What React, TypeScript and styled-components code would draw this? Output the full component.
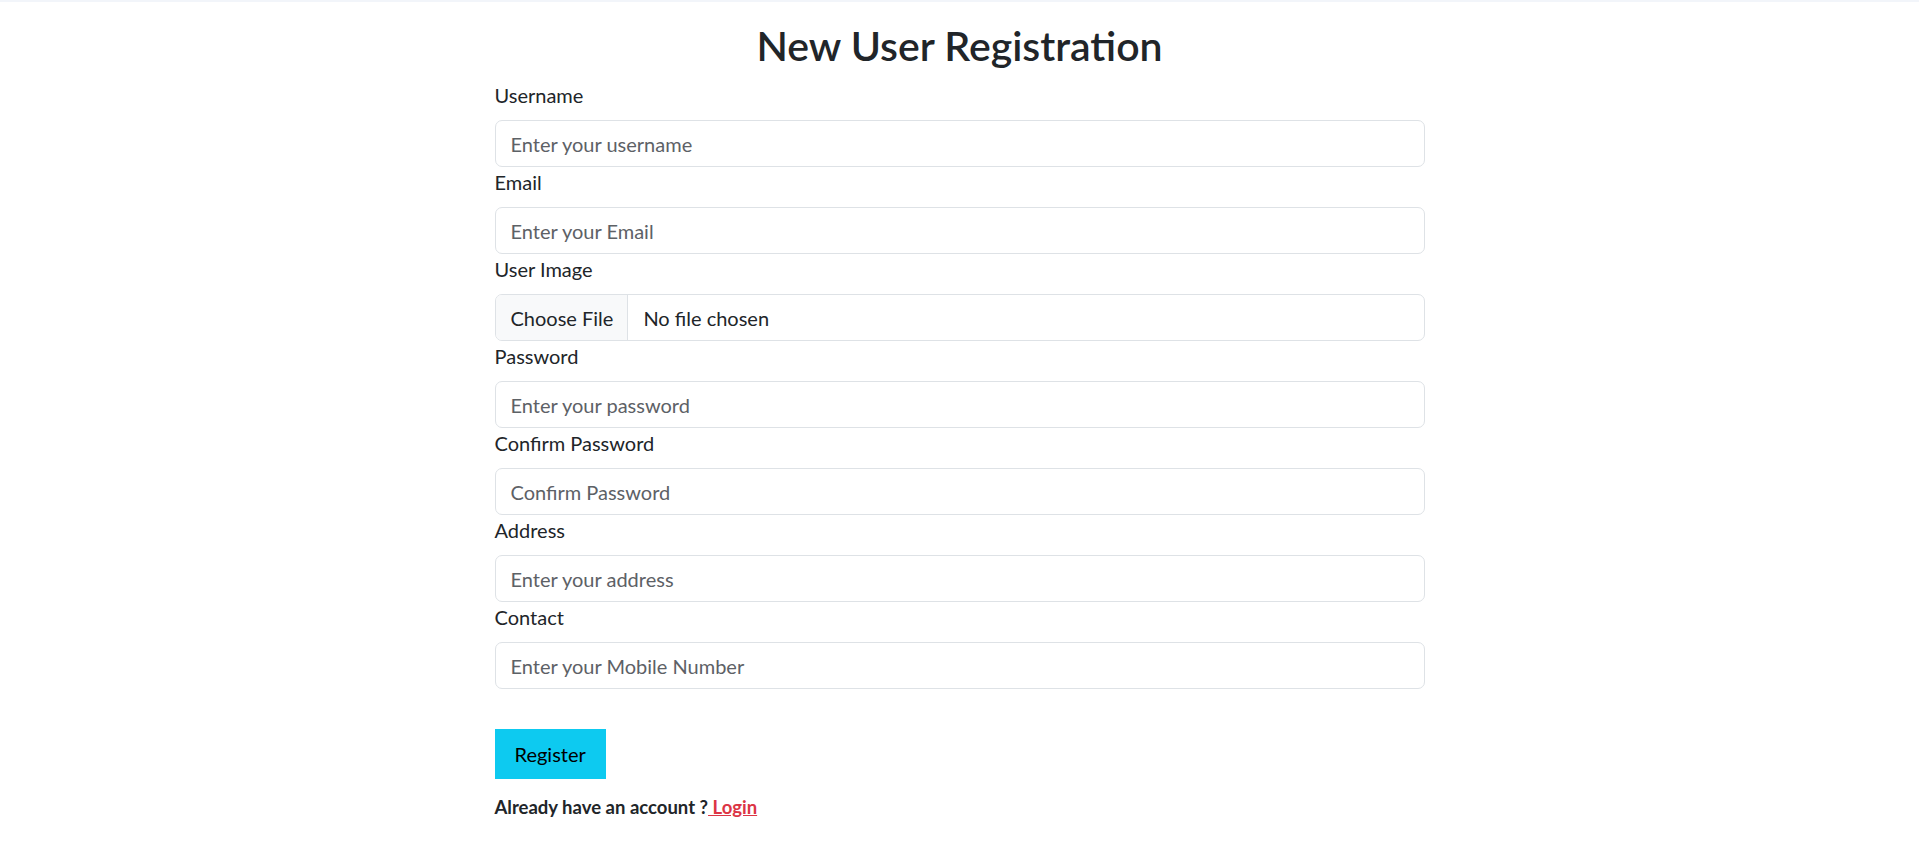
import React from "react";
import styled, { createGlobalStyle } from "styled-components";

const GlobalStyle = createGlobalStyle`
  html, body {
    margin: 0;
    padding: 0;
    background: #ffffff;
  }
  body {
    font-family: "Lato", "Open Sans", sans-serif;
    color: #212529;
    font-size: 20px;
    line-height: 1.5;
  }
  * { box-sizing: border-box; }
`;

const TopStrip = styled.div`
  height: 2px;
  background: #f2f5fa;
`;

const Container = styled.main`
  max-width: 930px;
  margin: 0 auto;
  padding-top: 20px;
`;

const Title = styled.h2`
  margin: 0 0 10px;
  text-align: center;
  font-size: 41px;
  line-height: 48px;
  font-weight: 600;
  color: #212529;
`;

const Form = styled.form`
  display: flex;
  flex-direction: column;
`;

const Field = styled.div`
  display: flex;
  flex-direction: column;
`;

const Label = styled.label`
  display: block;
  font-size: 20px;
  line-height: 30px;
  margin-bottom: 10px;
  color: #212529;
`;

const Input = styled.input`
  display: block;
  width: 100%;
  height: 47px;
  padding: 0 15px;
  font-family: inherit;
  font-size: 20px;
  line-height: 30px;
  color: #212529;
  background: #ffffff;
  border: 1px solid #dee2e6;
  border-radius: 7px;
  outline: none;

  &::placeholder {
    color: #5d6166;
    opacity: 1;
  }

  &[type="file"] {
    padding: 0 15px 0 0;
    overflow: hidden;
    cursor: pointer;
  }

  &::file-selector-button {
    height: 47px;
    margin: -1px 15px 0 0;
    padding: 0 14px 0 15px;
    font-family: inherit;
    font-size: 20px;
    color: #212529;
    background: #f8f9fa;
    border: 0;
    border-right: 1px solid #dee2e6;
    border-radius: 0;
    cursor: pointer;
  }
`;

const RegisterButton = styled.button`
  align-self: flex-start;
  margin-top: 40px;
  height: 50px;
  padding: 0 20px;
  font-family: inherit;
  font-size: 20px;
  color: #000000;
  background: #0dcaf0;
  border: 0;
  border-radius: 0;
  cursor: pointer;
`;

const Footnote = styled.p`
  margin: 15px 0 0;
  font-size: 18.5px;
  line-height: 26px;
  font-weight: 700;
  color: #212529;
`;

const LoginLink = styled.a`
  color: #dc3545;
  text-decoration: underline;
`;

type FieldDef = { id: string; label: string; type: string; placeholder?: string };

const fields: FieldDef[] = [
  { id: "username", label: "Username", type: "text", placeholder: "Enter your username" },
  { id: "email", label: "Email", type: "email", placeholder: "Enter your Email" },
  { id: "image", label: "User Image", type: "file" },
  { id: "password", label: "Password", type: "password", placeholder: "Enter your password" },
  { id: "confirm", label: "Confirm Password", type: "password", placeholder: "Confirm Password" },
  { id: "address", label: "Address", type: "text", placeholder: "Enter your address" },
  { id: "contact", label: "Contact", type: "text", placeholder: "Enter your Mobile Number" },
];

export default function App() {
  return (
    <>
      <GlobalStyle />
      <TopStrip />
      <Container>
        <Title>New User Registration</Title>
        <Form onSubmit={(e) => e.preventDefault()}>
          {fields.map((f) => (
            <Field key={f.id}>
              <Label htmlFor={f.id}>{f.label}</Label>
              <Input id={f.id} name={f.id} type={f.type} placeholder={f.placeholder} />
            </Field>
          ))}
          <RegisterButton type="submit">Register</RegisterButton>
        </Form>
        <Footnote>
          Already have an account ?<LoginLink href="#"> Login</LoginLink>
        </Footnote>
      </Container>
    </>
  );
}
